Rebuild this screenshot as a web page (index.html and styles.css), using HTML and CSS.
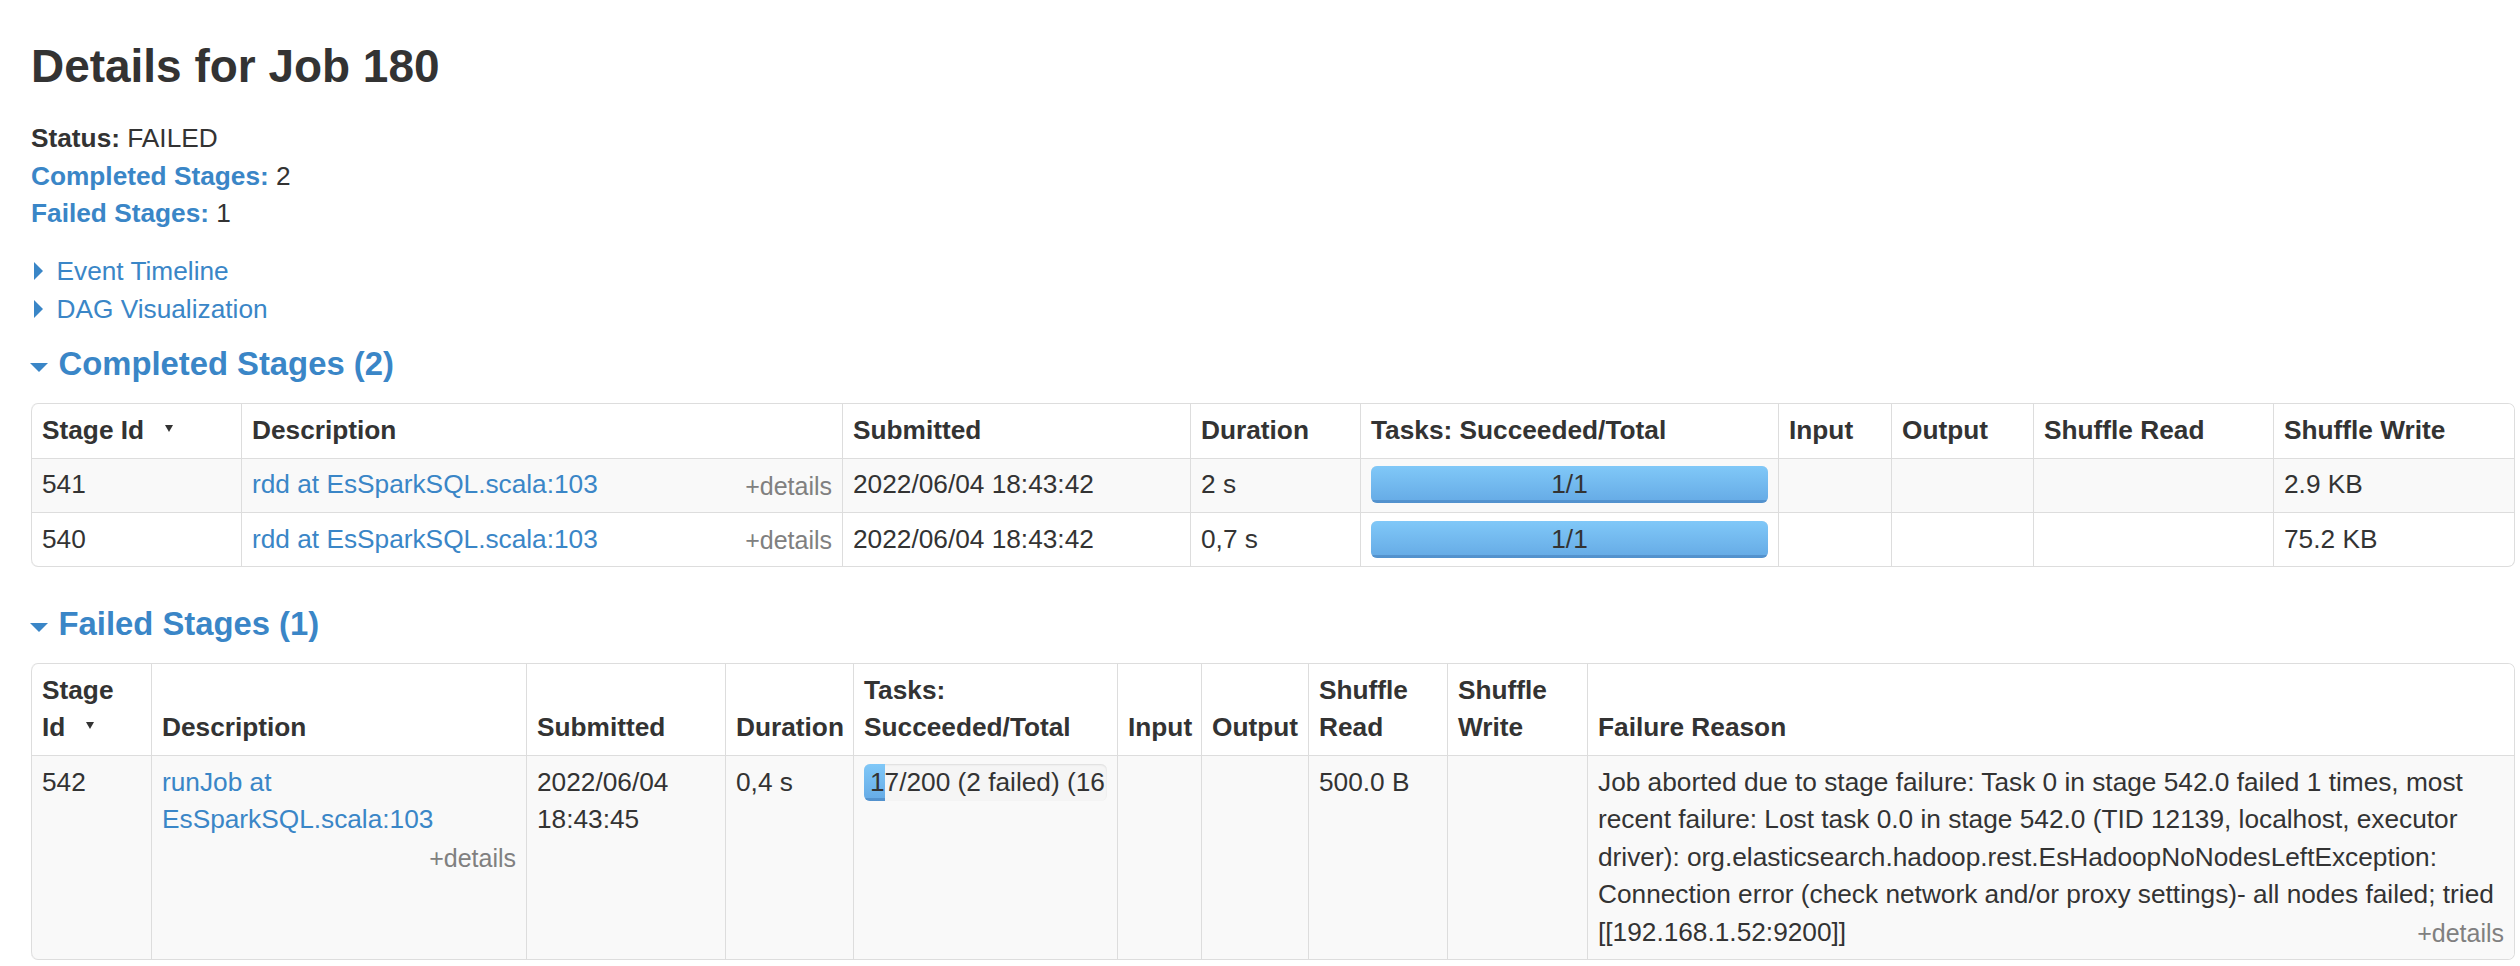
FILE: index.html
```html
<!DOCTYPE html>
<html>
<head>
<meta charset="utf-8">
<title>Details for Job 180</title>
<link rel="stylesheet" href="styles.css">
</head>
<body>
<div class="page">
  <h3 class="title">Details for Job 180</h3>
  <ul class="summary">
    <li><strong>Status:</strong> FAILED</li>
    <li><a href="#completed"><strong>Completed Stages:</strong></a> 2</li>
    <li><a href="#failed"><strong>Failed Stages:</strong></a> 1</li>
  </ul>
  <div class="toggles">
    <div class="toggle"><span class="arrow-closed"></span><a href="#timeline">Event Timeline</a></div>
    <div class="toggle"><span class="arrow-closed"></span><a href="#dag">DAG Visualization</a></div>
  </div>

  <h4 class="section" id="completed"><span class="arrow-open"></span><a href="#completed">Completed Stages (2)</a></h4>
  <table class="stages">
    <colgroup>
      <col class="c1-id"><col class="c1-desc"><col class="c1-sub"><col class="c1-dur"><col class="c1-tasks"><col class="c1-in"><col class="c1-out"><col class="c1-sr"><col>
    </colgroup>
    <thead>
      <tr>
        <th>Stage Id<span class="sort-arrow"></span></th>
        <th>Description</th>
        <th>Submitted</th>
        <th>Duration</th>
        <th>Tasks: Succeeded/Total</th>
        <th>Input</th>
        <th>Output</th>
        <th>Shuffle Read</th>
        <th>Shuffle Write</th>
      </tr>
    </thead>
    <tbody>
      <tr>
        <td>541</td>
        <td><a href="#s541">rdd at EsSparkSQL.scala:103</a> <span class="expand-details">+details</span></td>
        <td>2022/06/04 18:43:42</td>
        <td>2 s</td>
        <td><div class="progress"><div class="bar" style="width:100%"></div><span class="progress-text">1/1</span></div></td>
        <td></td>
        <td></td>
        <td></td>
        <td>2.9 KB</td>
      </tr>
      <tr>
        <td>540</td>
        <td><a href="#s540">rdd at EsSparkSQL.scala:103</a> <span class="expand-details">+details</span></td>
        <td>2022/06/04 18:43:42</td>
        <td>0,7 s</td>
        <td><div class="progress"><div class="bar" style="width:100%"></div><span class="progress-text">1/1</span></div></td>
        <td></td>
        <td></td>
        <td></td>
        <td>75.2 KB</td>
      </tr>
    </tbody>
  </table>

  <h4 class="section" id="failed"><span class="arrow-open"></span><a href="#failed">Failed Stages (1)</a></h4>
  <table class="stages">
    <colgroup>
      <col class="c2-id"><col class="c2-desc"><col class="c2-sub"><col class="c2-dur"><col class="c2-tasks"><col class="c2-in"><col class="c2-out"><col class="c2-sr"><col class="c2-sw"><col>
    </colgroup>
    <thead>
      <tr>
        <th>Stage Id<span class="sort-arrow"></span></th>
        <th>Description</th>
        <th>Submitted</th>
        <th>Duration</th>
        <th>Tasks: Succeeded/Total</th>
        <th>Input</th>
        <th>Output</th>
        <th>Shuffle Read</th>
        <th>Shuffle Write</th>
        <th>Failure Reason</th>
      </tr>
    </thead>
    <tbody>
      <tr>
        <td>542</td>
        <td><a href="#s542">runJob at EsSparkSQL.scala:103</a> <span class="expand-details">+details</span></td>
        <td>2022/06/04 18:43:45</td>
        <td>0,4 s</td>
        <td><div class="progress"><div class="bar" style="width:8.5%"></div><span class="progress-text">17/200 (2 failed) (16</span></div></td>
        <td></td>
        <td></td>
        <td>500.0 B</td>
        <td></td>
        <td>Job aborted due to stage failure: Task 0 in stage 542.0 failed 1 times, most recent failure: Lost task 0.0 in stage 542.0 (TID 12139, localhost, executor driver): org.elasticsearch.hadoop.rest.EsHadoopNoNodesLeftException: Connection error (check network and/or proxy settings)- all nodes failed; tried [[192.168.1.52:9200]] <span class="expand-details">+details</span></td>
      </tr>
    </tbody>
  </table>
</div>
</body>
</html>
```

FILE: styles.css
```css
html, body {
  margin: 0;
  padding: 0;
  background: #ffffff;
}

body {
  font-family: "Liberation Sans", Arial, Helvetica, sans-serif;
  font-size: 26.25px;
  line-height: 37.5px;
  color: #333333;
}

a {
  color: #3a86c7;
  text-decoration: none;
}

.page {
  padding: 0 5px 0 31px;
}

.title {
  font-size: 45.94px;
  line-height: 50px;
  font-weight: bold;
  margin: 41px 0 29px;
}

.summary {
  list-style: none;
  margin: 0;
  padding: 0;
}

.toggles {
  margin-top: 20.6px;
}

.toggle a {
  color: #3a86c7;
}

.arrow-closed {
  display: inline-block;
  width: 0;
  height: 0;
  border-top: 9.375px solid transparent;
  border-bottom: 9.375px solid transparent;
  border-left: 9.375px solid #3a86c7;
  margin-left: 2.5px;
  margin-right: 14px;
}

.arrow-open {
  display: inline-block;
  width: 0;
  height: 0;
  border-left: 9.375px solid transparent;
  border-right: 9.375px solid transparent;
  border-top: 9.375px solid #3a86c7;
  margin-left: -1px;
  margin-right: 10.5px;
  margin-bottom: 3px;
}

.section {
  font-size: 32.81px;
  line-height: 37.5px;
  font-weight: bold;
  margin: 16.7px 0 21px;
}

.stages {
  width: 100%;
  table-layout: fixed;
  border-collapse: separate;
  border-spacing: 0;
  border: 1px solid #dddddd;
  border-left: 0;
  border-radius: 7px;
  margin-bottom: 37.5px;
}

.stages th,
.stages td {
  padding: 7.875px 10px;
  border-left: 1px solid #dddddd;
  border-top: 1px solid #dddddd;
  text-align: left;
}

.stages th {
  font-weight: bold;
  vertical-align: bottom;
  border-top: 0;
  background: #ffffff;
}

.stages td {
  vertical-align: top;
}

.stages tbody tr:nth-child(odd) td {
  background: #f9f9f9;
}

.stages thead tr th:first-child {
  border-top-left-radius: 7px;
}

.stages tbody tr:last-child td:first-child {
  border-bottom-left-radius: 7px;
}

.stages thead tr th:last-child {
  border-top-right-radius: 6px;
}

.stages tbody tr:last-child td:last-child {
  border-bottom-right-radius: 6px;
}

.sort-arrow {
  display: inline-block;
  width: 0;
  height: 0;
  border-left: 4px solid transparent;
  border-right: 4px solid transparent;
  border-top: 7px solid #333333;
  margin-left: 21px;
  margin-bottom: 7px;
}

.expand-details {
  float: right;
  margin-left: 8px;
  margin-top: 4.25px;
  font-size: 25px;
  line-height: 30px;
  color: #808080;
}

.progress {
  position: relative;
  height: 37px;
  border-radius: 6px;
  background: #f5f5f5;
  box-shadow: inset 0 1px 2px rgba(0, 0, 0, 0.1);
  overflow: hidden;
}

.bar {
  height: 100%;
  background: linear-gradient(to bottom, #80c8f8, #65aae5);
  box-shadow: inset 0 -3px 0 rgba(50, 100, 160, 0.35);
}

.progress-text {
  position: absolute;
  top: 0;
  left: 0;
  right: 0;
  padding: 0 6px;
  text-align: center;
  white-space: nowrap;
  overflow: hidden;
  line-height: 37px;
  color: #333333;
}

/* completed stages columns */
.c1-id { width: 210px; }
.c1-desc { width: 601px; }
.c1-sub { width: 348px; }
.c1-dur { width: 170px; }
.c1-tasks { width: 418px; }
.c1-in { width: 113px; }
.c1-out { width: 142px; }
.c1-sr { width: 240px; }

/* failed stages columns */
.c2-id { width: 120px; }
.c2-desc { width: 375px; }
.c2-sub { width: 199px; }
.c2-dur { width: 128px; }
.c2-tasks { width: 264px; }
.c2-in { width: 84px; }
.c2-out { width: 107px; }
.c2-sr { width: 139px; }
.c2-sw { width: 140px; }
```
